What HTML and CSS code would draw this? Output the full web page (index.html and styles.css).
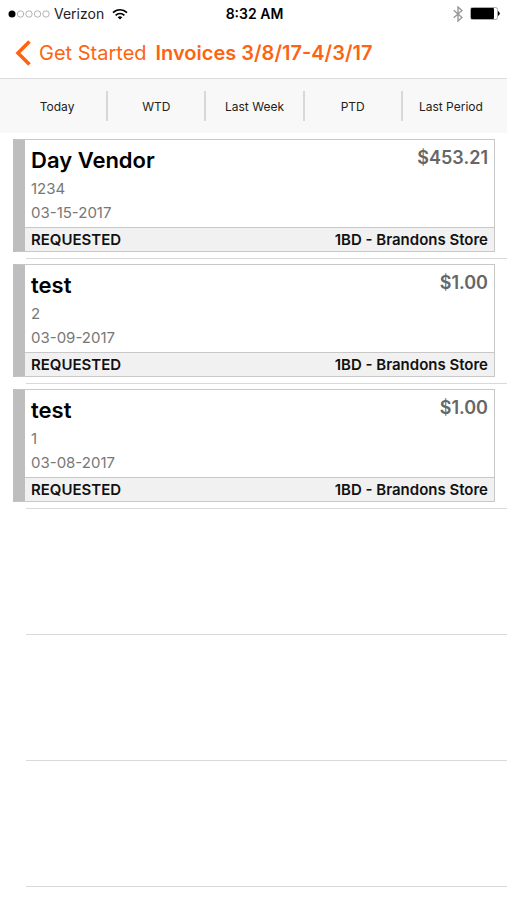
FILE: index.html
```html
<!DOCTYPE html>
<html lang="en">
<head>
  <meta charset="UTF-8" />
  <meta name="viewport" content="width=device-width, initial-scale=1.0"/>
  <title>Invoices</title>
  <link rel="stylesheet" href="styles.css">
</head>

<body>
  <div class="status-bar">
    <div class="carrier">
      <svg class="signal" width="42" height="8" viewBox="0 0 42 8">
        <circle cx="4" cy="4" r="3.5"/>
        <g fill="none" stroke="#aaa" stroke-width="0.9">
          <circle cx="12.5" cy="4" r="3.2"/>
          <circle cx="21" cy="4" r="3.2"/>
          <circle cx="29.5" cy="4" r="3.2"/>
          <circle cx="38" cy="4" r="3.2"/>
        </g>
      </svg>
      <span>Verizon</span>
      <svg class="wifi" width="16" height="12" viewBox="0 0 16 12">
        <g fill="none" stroke="#000" stroke-width="1.7">
          <path d="M1 4.6a10 10 0 0 1 14 0"/>
          <path d="M3.6 7.3a6.3 6.3 0 0 1 8.8 0"/>
        </g>
        <path d="M8 11.5 5.7 9.3a3.6 3.6 0 0 1 4.6 0z"/>
      </svg>
    </div>
    <div class="time">8:32 AM</div>
    <div class="power">
      <svg width="10" height="16" viewBox="0 0 10 16">
        <path d="M.7 4.3 9 11.5 5 15V1l4 3.5L.7 11.7" fill="none" stroke="#999" stroke-width="1.4"/>
      </svg>
      <svg width="31" height="13" viewBox="0 0 31 13">
        <rect x="0.5" y="0.5" width="27" height="12" rx="2" fill="#fff" stroke="#aaa"/>
        <rect x="1" y="1" width="23" height="11" rx="1"/>
        <path d="M28 4q3.5 2.5 0 5z"/>
      </svg>
    </div>
  </div>

  <header class="nav-bar">
    <a class="back" href="#">
      <svg width="17" height="26" viewBox="0 0 17 26">
        <path d="M15.5 1.5 4 13l11.5 11.5" fill="none" stroke="#fd6412" stroke-width="3.6"/>
      </svg>
      <span>Get Started</span>
    </a>
    <h1>Invoices 3/8/17-4/3/17</h1>
  </header>

  <nav class="periods">
    <button type="button">Today</button>
    <button type="button">WTD</button>
    <button type="button">Last Week</button>
    <button type="button">PTD</button>
    <button type="button">Last Period</button>
  </nav>

  <ul class="invoices">
    <li class="row">
      <article class="card">
        <div class="card-body">
          <div>
            <h2>Day Vendor</h2>
            <p>1234</p>
            <p>03-15-2017</p>
          </div>
          <div class="amount">$453.21</div>
        </div>
        <div class="card-footer">
          <span>REQUESTED</span>
          <span>1BD - Brandons Store</span>
        </div>
      </article>
    </li>
    <li class="row">
      <article class="card">
        <div class="card-body">
          <div>
            <h2>test</h2>
            <p>2</p>
            <p>03-09-2017</p>
          </div>
          <div class="amount">$1.00</div>
        </div>
        <div class="card-footer">
          <span>REQUESTED</span>
          <span>1BD - Brandons Store</span>
        </div>
      </article>
    </li>
    <li class="row">
      <article class="card">
        <div class="card-body">
          <div>
            <h2>test</h2>
            <p>1</p>
            <p>03-08-2017</p>
          </div>
          <div class="amount">$1.00</div>
        </div>
        <div class="card-footer">
          <span>REQUESTED</span>
          <span>1BD - Brandons Store</span>
        </div>
      </article>
    </li>
    <li class="row empty"></li>
    <li class="row empty"></li>
    <li class="row empty"></li>
  </ul>
</body>
</html>
```

FILE: styles.css
```css
* {
  box-sizing: border-box;
}
body {
  margin: 0;
  font-family: Inter, "Liberation Sans", sans-serif;
  background: #fff;
  color: #000;
}
h1, h2, p, ul {
  margin: 0;
  padding: 0;
}
svg {
  display: block;
  flex: none;
}
.status-bar {
  display: grid;
  grid-template-columns: 1fr auto 1fr;
  align-items: center;
  height: 27px;
  padding: 0 6px 0 8px;
  font-size: 14px;
}
.carrier {
  display: flex;
  align-items: center;
  gap: 4px;
  color: #222;
}
.wifi {
  margin-left: 4px;
}
.time {
  font-weight: 600;
}
.power {
  display: flex;
  justify-content: flex-end;
  align-items: center;
  gap: 7px;
}
.nav-bar {
  display: flex;
  align-items: center;
  gap: 9px;
  height: 52px;
  padding: 0 14px;
  border-bottom: 1px solid #dcdcdc;
  color: #fd6412;
  font-size: 20px;
  line-height: 24px;
  white-space: nowrap;
}
.back {
  display: flex;
  align-items: center;
  gap: 8px;
  color: inherit;
  text-decoration: none;
}
.nav-bar h1 {
  font-size: 20px;
  font-weight: 600;
}
.periods {
  display: grid;
  grid-template-columns: repeat(5, 1fr);
  padding: 12px 8px;
  margin: 0 0 1px;
  background: #f8f8f8;
}
.periods button {
  height: 30px;
  padding: 0;
  border: 0;
  background: none;
  color: #222;
  font-family: inherit;
  font-size: 12px;
  cursor: pointer;
}
.periods button + button {
  border-left: 2px solid #d8d8d8;
}
.invoices {
  list-style: none;
}
.row {
  display: flow-root;
  height: 125px;
  padding: 5px 12px 0 13px;
  background: linear-gradient(#d9d9d9, #d9d9d9) 26px 100% / 100% 1px no-repeat;
}
.empty {
  height: 126px;
}
.card {
  border: 1px solid #c8c8c8;
  border-left: 12px solid #bebebe;
}
.card-body {
  display: flex;
  justify-content: space-between;
  height: 87px;
  padding: 6px 6px 0;
}
.card h2 {
  margin-bottom: 3px;
  font-size: 22px;
  font-weight: 600;
  line-height: 28px;
}
.card p {
  color: #777;
  font-size: 15px;
  line-height: 24px;
}
.amount {
  color: #666;
  font-size: 18px;
  font-weight: 600;
  line-height: 24px;
}
.card-footer {
  display: flex;
  justify-content: space-between;
  padding: 0 6px;
  border-top: 1px solid #c8c8c8;
  background: #f1f1f1;
  color: #111;
  font-size: 15px;
  font-weight: 600;
  line-height: 23px;
}
```
